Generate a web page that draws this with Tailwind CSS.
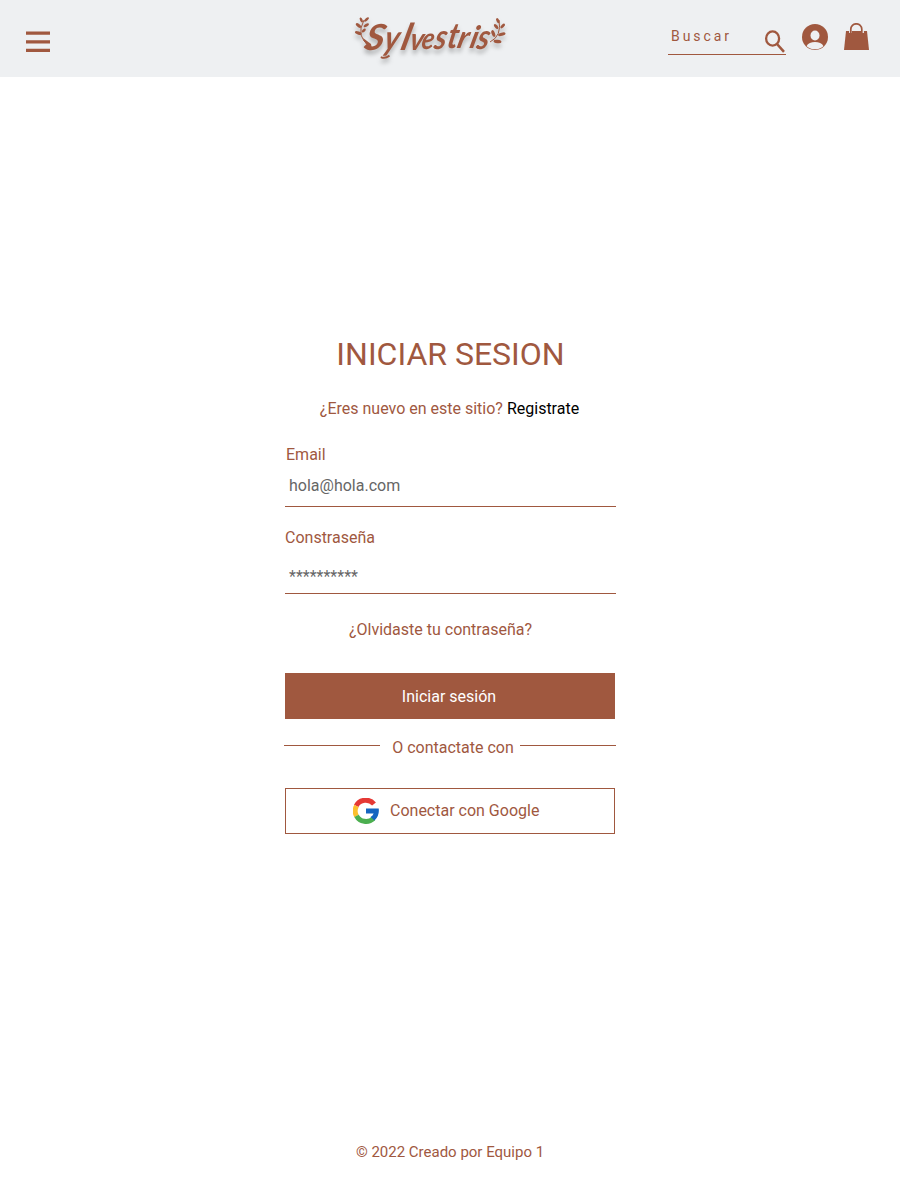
<!DOCTYPE html>
<html lang="es">
<head>
<meta charset="utf-8">
<title>Sylvestris</title>
<script src="https://cdn.jsdelivr.net/npm/@tailwindcss/browser@4"></script>
</head>
<body class="flex h-[1194px] flex-col bg-white font-['Roboto',sans-serif] text-base leading-5 text-[#a0583f]">
<header class="flex h-[77px] shrink-0 items-start bg-[#eef0f2]">
  <button class="mt-[31px] ml-[26px]" aria-label="Menú">
    <svg class="block" width="24" height="22" fill="#a0583f"><path d="M0 .5h24v3.300H0zM0 9.200h24v3.300H0zM0 17.700h24v3.300H0z"/></svg>
  </button>
  <svg class="ml-[295px] block drop-shadow-[0_4px_2px_rgba(0,0,0,0.25)]" width="170" height="77" viewBox="345 0 170 77" fill="#a0583f">
    <g font-family="Lato, sans-serif" font-style="italic" font-weight="700">
      <text transform="translate(363 49.500) scale(1.050 1) skewX(-12)" font-size="36">S</text>
      <text transform="translate(382.500 49.500) scale(.950 1.080) skewX(-14)" font-size="32">y</text>
      <text transform="translate(399.500 49.500) skewX(-14)" font-size="37">l</text>
      <text transform="translate(408.500 49.500) scale(.900 1) skewX(-12)" font-size="31">v</text>
      <text transform="translate(420.500 49) scale(.850 1) skewX(-12)" font-size="30">e</text>
      <text transform="translate(433 48.500) scale(.980 1.150) skewX(-14)" font-size="30">s</text>
      <text transform="translate(446 48) scale(.950 1.150) skewX(-14)" font-size="31">t</text>
      <text transform="translate(456 48) skewX(-14)" font-size="31">r</text>
      <text transform="translate(468.500 48) skewX(-14)" font-size="31">i</text>
      <text transform="translate(475.500 48.500) scale(1 1.150) skewX(-14)" font-size="30">s</text>
    </g>
    <path d="M381 56.200q4 1.800 8-1.500l1 1.800q-5 3.600-9.500 1.400z"/>
    <path d="M370 46Q355 37 364 20M490 42Q502 36 499 20" fill="none" stroke="#a0583f" stroke-width="1"/>
    <path d="M363 38q1 6 9 11l-1-5z"/>
    <g>
      <ellipse cx="366.500" cy="19.500" rx="3" ry="1.300" transform="rotate(-40 366.500 19.500)"/>
      <ellipse cx="361.300" cy="20" rx="2.700" ry="1.300" transform="rotate(65 361.300 20)"/>
      <ellipse cx="358.500" cy="25.500" rx="3.200" ry="1.500" transform="rotate(38 358.500 25.500)"/>
      <ellipse cx="366.300" cy="25.300" rx="3" ry="1.400" transform="rotate(-30 366.300 25.300)"/>
      <ellipse cx="358.300" cy="33" rx="3.500" ry="1.600" transform="rotate(20 358.300 33)"/>
      <ellipse cx="363.800" cy="30.500" rx="2.500" ry="1.300" transform="rotate(-45 363.800 30.500)"/>
      <ellipse cx="497.800" cy="20.700" rx="2.800" ry="1.400" transform="rotate(65 497.800 20.700)"/>
      <ellipse cx="502.700" cy="26" rx="3" ry="1.400" transform="rotate(-45 502.700 26)"/>
      <ellipse cx="496.200" cy="26.500" rx="3" ry="1.500" transform="rotate(50 496.200 26.500)"/>
      <ellipse cx="501.800" cy="34.300" rx="3.800" ry="1.600" transform="rotate(-15 501.800 34.300)"/>
      <ellipse cx="493.300" cy="33.500" rx="3.500" ry="1.700" transform="rotate(70 493.300 33.500)"/>
      <ellipse cx="497.500" cy="41.500" rx="4" ry="1.700" transform="rotate(8 497.500 41.500)"/>
    </g>
  </svg>
  <div class="ml-[153px] flex h-[55px] w-[118px] items-start justify-between border-b border-[#a0583f] pl-[3px]">
    <span class="mt-[26px] text-sm tracking-[2.950px]">Buscar</span>
    <svg class="mt-[30px] block" width="22" height="24" viewBox="0 0 22 24" fill="none" stroke="#a0583f"><ellipse cx="8.600" cy="8.500" rx="6.500" ry="7.200" stroke-width="2.300"/><path d="M13 14l7 7.800" stroke-width="2.600"/></svg>
  </div>
  <svg class="mt-6 ml-4 block" width="26" height="26" viewBox="0 0 26 26"><circle cx="13" cy="13" r="13" fill="#a0583f"/><ellipse cx="13" cy="11.500" rx="4.500" ry="5" fill="#eef0f2"/><path d="M4.500 22.200C7 16.700 19 16.700 21.500 22.200Q18 25.300 13 25.300T4.500 22.200z" fill="#eef0f2"/></svg>
  <svg class="mt-[23px] ml-4 block" width="25" height="27" viewBox="0 0 25 27"><path d="M2 8h21l2 19H0z" fill="#a0583f"/><path d="M6.500 10V6.500a6 5.800 0 0 1 12 0V10" fill="none" stroke="#eef0f2" stroke-width="2.800"/><path d="M6.800 10V6.300a5.500 5.500 0 0 1 11 0V10" fill="none" stroke="#a0583f" stroke-width="1.700"/></svg>
</header>
<main class="ml-[285px] flex w-[331px] flex-1 flex-col pt-[257px]">
  <h1 class="text-center text-[32px] leading-10">INICIAR SESION</h1>
  <p class="mt-[25px] pr-[2px] text-center">¿Eres nuevo en este sitio? <a class="text-black">Registrate</a></p>
  <label class="mt-[26px] pl-px">Email</label>
  <div class="mt-[11px] h-[31px] border-b border-[#a0583f] pl-1 text-[#666]">hola@hola.com</div>
  <label class="mt-[21px]">Constraseña</label>
  <div class="mt-[19px] h-[27px] border-b border-[#a0583f] pl-1 text-[#666]">**********</div>
  <a class="mt-[26px] pr-[20px] text-center">¿Olvidaste tu contraseña?</a>
  <button class="mt-[33px] h-[46px] w-[330px] bg-[#a0583f] pt-px pr-[2px] text-white">Iniciar sesión</button>
  <div class="mt-[19px] -ml-px flex w-[332px] items-start justify-between">
    <span class="mt-[7px] h-px w-24 bg-[#a0583f]"></span>
    <span class="pl-[6px]">O contactate con</span>
    <span class="mt-[7px] h-px w-24 bg-[#a0583f]"></span>
  </div>
  <button class="mt-[30px] flex h-[46px] w-[330px] items-center gap-[11px] border border-[#a0583f] pl-[67px]">
    <svg class="block" width="26" height="26" viewBox="0 0 26 26" fill="none" stroke-width="5"><path d="M3.200 7.800A10.700 10.400 0 0 1 21 6" stroke="#e53935"/><path d="M3.500 18A10.700 10.400 0 0 1 3.500 8" stroke="#fbc02d"/><path d="M3.500 17.800A10.700 10.400 0 0 0 20.500 20.500" stroke="#4caf50"/><path d="M13 10.500h12.700q1 7-4.200 12L17.600 19q2.300-1.500 3-3.500H13z" fill="#1565c0"/></svg>
    <span>Conectar con Google</span>
  </button>
</main>
<footer class="pb-8 text-center text-[15px] leading-5">© 2022 Creado por Equipo 1</footer>
</body>
</html>
